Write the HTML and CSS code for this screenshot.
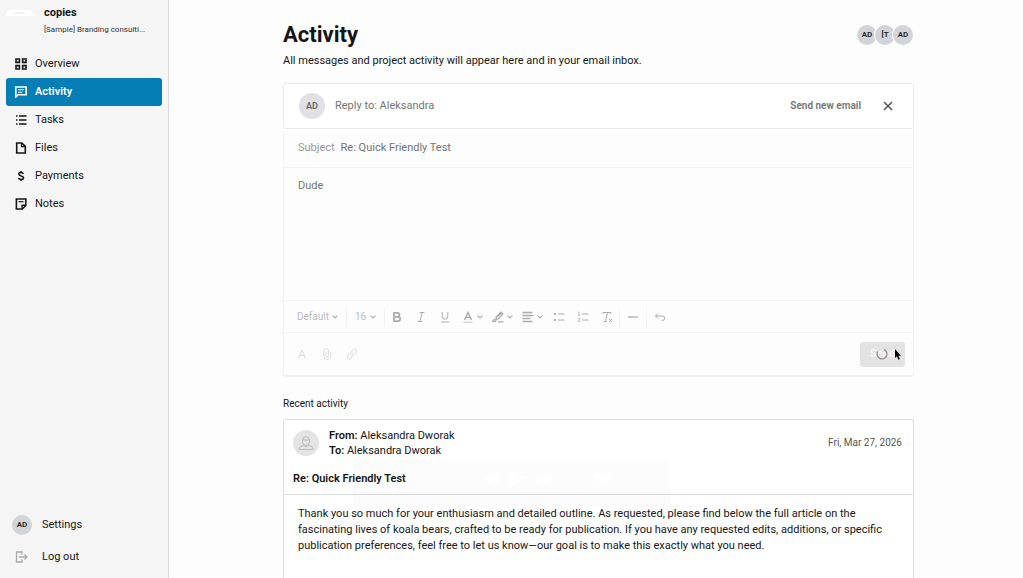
FILE: index.html
```html
<!DOCTYPE html>
<html lang="en">
<head>
<meta charset="utf-8">
<title>Activity</title>
<link rel="stylesheet" href="styles.css">
</head>
<body>
<div class="app">
  <aside class="sidebar">
    <div class="brand">
      <svg class="brand-logo" width="31" height="8" viewBox="0 0 31 8"><path d="M3 1h23l4 6H0z" fill="#fff"/><path d="M9 4h11" stroke="#e6e6e6"/></svg>
      <div class="brand-text">
        <strong class="brand-name">copies</strong>
        <span class="brand-project">[Sample] Branding consulti...</span>
      </div>
    </div>
    <nav class="nav">
      <a class="nav-item" href="#"><svg class="nav-icon" viewBox="0 0 12 12"><path d="M1 1h3.4v3.4H1zM7.6 1H11v3.4H7.6zM1 7.6h3.4V11H1zM7.6 7.6H11V11H7.6z"/></svg>Overview</a>
      <a class="nav-item active" href="#"><svg class="nav-icon" viewBox="0 0 12 12"><path d="M.8 11V1h10.4v7.8H3z"/><path d="M3 3.7h6M3 6.2h4.4" stroke-width="1.1"/></svg>Activity</a>
      <a class="nav-item" href="#"><svg class="nav-icon" viewBox="0 0 12 12"><path d="M1 2h1.5M1 6h1.5M1 10h1.5M4 2h7.5M4 6h7.5M4 10h7.5" stroke-width="1.4"/></svg>Tasks</a>
      <a class="nav-item" href="#"><svg class="nav-icon" viewBox="0 0 12 12"><path d="M1.7 1h5.1l3.5 3.4V11H1.7z"/><path d="M6.5 1v3.7h3.8" stroke-width="1.2"/></svg>Files</a>
      <a class="nav-item" href="#"><svg class="nav-icon" viewBox="0 0 12 12"><path d="M8.3 3.9C8 2.9 7.200 2.500 6 2.500c-1.300 0-2.200.6-2.200 1.600 0 2.400 4.700 1.200 4.700 3.700 0 1-.9 1.700-2.400 1.700-1.400 0-2.300-.6-2.500-1.700M6 1v1.500M6 9.500V11"/></svg>Payments</a>
      <a class="nav-item" href="#"><svg class="nav-icon" viewBox="0 0 12 12"><path d="M1.400 1h9.400v6.500L7.300 11H1.400z"/><path d="M7.100 11V7.300h3.700" stroke-width="1.400"/><path d="M3.500 3.700h5" stroke-width="1.200"/></svg>Notes</a>
    </nav>
    <div class="account">
      <a class="account-item" href="#"><span class="avatar">AD</span>Settings</a>
      <a class="account-item" href="#"><svg class="logout" width="20" height="12" viewBox="0 0 20 12"><path d="M10 3.500V1H4.500v10H10V8.500M7 6h8M12.500 3.500L15 6l-2.500 2.500"/></svg>Log out</a>
    </div>
  </aside>
  <main class="main">
    <div class="content">
      <header class="page-head">
        <h1>Activity</h1>
        <div class="members"><span class="avatar">AD</span><span class="avatar">[T</span><span class="avatar">AD</span></div>
      </header>
      <p class="intro">All messages and project activity will appear here and in your email inbox.</p>

      <form class="composer">
        <div class="reply-bar">
          <span class="avatar large">AD</span>
          <span class="reply-to">Reply to: Aleksandra</span>
          <button class="new-email" type="button">Send new email</button>
          <button class="close" type="button" aria-label="Close"><svg width="10" height="10" viewBox="0 0 10 10"><path d="M1 1l8 8M9 1L1 9"/></svg></button>
        </div>
        <div class="editor">
          <div class="subject"><label for="subject">Subject</label><input id="subject" type="text" value="Re: Quick Friendly Test"></div>
          <textarea class="message" aria-label="Message">Dude</textarea>
          <div class="toolbar">
            <span class="tool-select"><select class="font-select" aria-label="Font"><option>Default</option></select><svg class="chev" viewBox="0 0 6 4"><path d="M.6.7L3 3 5.400.7"/></svg></span>
            <span class="tool-select"><select class="size-select" aria-label="Size"><option>16</option></select><svg class="chev" viewBox="0 0 6 4"><path d="M.6.7L3 3 5.400.7"/></svg></span>
            <button class="tool" type="button" aria-label="Bold"><svg viewBox="0 0 12 12"><path d="M3 1.800h3.500a2 2 0 0 1 0 4H3zM3 5.800h4a2.200 2.200 0 0 1 0 4.400H3z" stroke-width="1.800"/></svg></button>
            <button class="tool" type="button" aria-label="Italic"><svg viewBox="0 0 12 12"><path d="M4.500 1.500h5M2.500 10.500h5M7.200 1.500l-2.400 9"/></svg></button>
            <button class="tool" type="button" aria-label="Underline"><svg viewBox="0 0 12 12"><path d="M3.200 1v4.400a2.800 2.800 0 0 0 5.600 0V1M2 11h8"/></svg></button>
            <button class="tool wide" type="button" aria-label="Text color"><svg viewBox="0 0 12 12"><path d="M2.500 9L6 1.500 9.500 9M3.600 6.500h4.800" stroke-width="1.500"/><path d="M1.500 11.200h9" stroke="#c5c8d8"/></svg><svg class="chev" viewBox="0 0 6 4"><path d="M.6.7L3 3 5.400.7"/></svg></button>
            <button class="tool wide" type="button" aria-label="Highlight"><svg viewBox="0 0 12 12"><path d="M4 6.500l4.800-5.300 2 1.600-4.600 5.200-1.800.3zM5.200 5.500L9.500 2M.5 10.300l2-2 1.500 1.500-.8.800zM6 10.800h5.500" stroke-width="1.300"/></svg><svg class="chev" viewBox="0 0 6 4"><path d="M.6.7L3 3 5.400.7"/></svg></button>
            <button class="tool wide" type="button" aria-label="Align"><svg viewBox="0 0 12 12"><path d="M.5 1.500h10M.5 4.500h11M.5 7.500h8M.5 10.500h10" stroke-width="1.300"/></svg><svg class="chev" viewBox="0 0 6 4"><path d="M.6.7L3 3 5.400.7"/></svg></button>
            <button class="tool" type="button" aria-label="Bulleted list"><svg viewBox="0 0 12 12"><path d="M1 3h1.800M1 9h1.800" stroke-width="1.800"/><path d="M5 3h6.500M5 9h6.500"/></svg></button>
            <button class="tool" type="button" aria-label="Numbered list"><svg viewBox="0 0 12 12"><path d="M1 1.200h1v3M.8 4.300h2.400M1 7.300h1.700v1.500L1 10.500h2" stroke-width=".8"/><path d="M5 3h6.500M5 9h6.500"/></svg></button>
            <button class="tool" type="button" aria-label="Clear formatting"><svg viewBox="0 0 12 12"><path d="M2 3V1.500h8V3M6.500 1.500l-2 9M2.800 10.500h3M8 8l3 3M11 8l-3 3"/></svg></button>
            <button class="tool divided" type="button" aria-label="Horizontal rule"><svg viewBox="0 0 12 12"><path d="M1 6h10" stroke-width="1.300"/></svg></button>
            <button class="tool divided" type="button" aria-label="Undo"><svg viewBox="0 0 12 12"><path d="M4 2.500L1.500 5 4 7.500M1.500 5H8.500a2.200 2.200 0 0 1 0 4.400H7.500"/></svg></button>
          </div>
          <div class="send-row">
            <button class="tool" type="button" aria-label="Format"><svg viewBox="0 0 12 12"><path d="M2.500 10.500L6 2l3.500 8.500M3.700 7.500h4.600"/></svg></button>
            <button class="tool" type="button" aria-label="Attach file"><svg viewBox="0 0 12 12"><path d="M9.800 4v4a3.500 3.500 0 0 1-7 0V3.200a2.400 2.400 0 0 1 4.800 0v4.600a1.300 1.300 0 0 1-2.600 0V4"/></svg></button>
            <button class="tool" type="button" aria-label="Insert link"><svg viewBox="0 0 12 12"><path d="M5.300 7.300a2 2 0 0 1-.3-2.400l1.800-3a2 2 0 0 1 3.500 2.100L9 6.300M6.700 4.700a2 2 0 0 1 .3 2.400l-1.800 3a2 2 0 0 1-3.500-2.100L3 5.700"/></svg></button>
            <button class="send" type="button">Send
              <svg class="spinner" width="14" height="14" viewBox="0 0 14 14"><path d="M9 2.300a5 5 0 1 1-6.300 2"/></svg>
              <svg class="pointer" width="9" height="14" viewBox="0 0 9 14"><path d="M1 1v9l1.900-1.700 1.500 3.400 1.500-.7-1.500-3.300h2.500z"/></svg>
            </button>
          </div>
        </div>
      </form>

      <h2>Recent activity</h2>
      <article class="mail">
        <header class="mail-head">
          <div class="mail-meta">
            <span class="person"><svg width="16" height="16" viewBox="0 0 16 16"><path d="M4.500 5.500a3.500 4 0 0 1 7 0v1a3.500 4 0 0 1-7 0zM4.500 5h7M1 14.500c0-2.500 1.500-3.500 4.500-4L8 12l2.500-1.500c3 .5 4.500 1.500 4.500 4z"/></svg></span>
            <div class="parties"><div><b>From:</b> Aleksandra Dworak</div><div><b>To:</b> Aleksandra Dworak</div></div>
            <time datetime="2026-03-27">Fri, Mar 27, 2026</time>
          </div>
          <h3>Re: Quick Friendly Test</h3>
          <div class="player" aria-hidden="true"><svg width="180" height="20" viewBox="0 0 180 20"><path d="M8 10l8-5v10zM16 10l8-5v10zM36 2l15 8-15 8zM62 5l8 5-8 5zM70 5l8 5-8 5zM120 5h14v9h-14z"/></svg></div>
        </header>
        <p class="mail-body">Thank you so much for your enthusiasm and detailed outline. As requested, please find below the full article on the fascinating lives of koala bears, crafted to be ready for publication. If you have any requested edits, additions, or specific publication preferences, feel free to let us know—our goal is to make this exactly what you need.</p>
      </article>
    </div>
  </main>
</div>
</body>
</html>
```
FILE: styles.css
```css
* { box-sizing: border-box; }
body { margin: 0; background: #fdfdfd; color: #161616; font: 11px/16px Roboto, "Liberation Sans", sans-serif; }
a { color: inherit; text-decoration: none; }
button, input, select, textarea { margin: 0; padding: 0; border: 0; background: none; color: inherit; font: inherit; }
svg { fill: none; stroke: currentColor; flex: none; }
h1, h2, h3, p { margin: 0; }
.app { display: flex; height: 100vh; overflow: hidden; }
.sidebar { display: flex; flex-direction: column; flex: 0 0 169px; background: #f5f5f5; border-right: 1px solid #dcdcdc; }
.brand { display: flex; gap: 8px; padding: 5px 5px 0; height: 50px; }
.brand-logo { margin-top: 4px; stroke: none; }
.brand-text { display: flex; flex-direction: column; gap: 1px; }
.brand-name { font-size: 11px; }
.brand-project { font-size: 8px; white-space: nowrap; color: #333; }
.nav { display: flex; flex-direction: column; padding: 0 6px; }
.nav-item { display: flex; align-items: center; gap: 8px; height: 28px; padding: 0 9px; border-radius: 3px; }
.nav-item.active { background: #057db5; color: #fff; font-weight: 600; }
.nav-icon { width: 12px; height: 12px; stroke-width: 1.6; }
.account { margin-top: auto; padding: 0 12px 5px; }
.account-item { display: flex; align-items: center; gap: 10px; height: 32px; }
.logout { color: #aaa; stroke-width: 1.3; }
.avatar { display: flex; align-items: center; justify-content: center; flex: none; width: 20px; height: 20px; border-radius: 50%; background: #d3d4d7; font-size: 8px; font-weight: 600; color: #222; }
.avatar.large { width: 26px; height: 26px; background: #e1e1e5; color: #666; font-size: 9px; }
.main { flex: 1; min-width: 0; padding: 20px 16px 0 21px; }
.content { max-width: 631px; margin: 0 auto; }
.page-head { display: flex; align-items: center; justify-content: space-between; height: 30px; }
h1 { font-size: 22px; line-height: 30px; font-weight: 700; }
.members { display: flex; padding-right: 1px; }
.members .avatar { box-shadow: 0 0 0 1px #fdfdfd; }
.members .avatar + .avatar { margin-left: -2px; }
.intro { padding-top: 3px; }
.composer { margin-top: 14px; color: #747474; }
.reply-bar { display: flex; align-items: center; height: 46px; padding: 0 15px; border: 1px solid #ebebeb; border-radius: 3px; background: #fff; }
.reply-to { margin-left: 10px; }
.new-email { margin-left: auto; font-size: 10px; font-weight: 600; }
.close { display: flex; padding: 5px; margin-left: 17px; }
.close svg { stroke: #555; stroke-width: 1.5; }
.editor { border: 1px solid #f5f5f7; border-top: 0; border-bottom: 2px solid #f2f2f6; border-radius: 0 0 3px 3px; }
.subject { display: flex; align-items: center; gap: 6px; height: 39px; padding: 0 14px; border-bottom: 1px solid #f3f3f3; }
.subject label { color: #999; }
.subject input { flex: 1; }
.message { display: block; width: 100%; height: 132px; padding: 10px 14px; resize: none; }
.toolbar { display: flex; align-items: center; height: 33px; border-top: 1px solid #f4f4f4; border-bottom: 1px solid #f4f4f4; padding-left: 5px; color: #acacac; }
.tool-select { display: flex; align-items: center; justify-content: center; gap: 3px; height: 20px; padding: 0 8px; border-right: 1px solid #f3f3f3; font-size: 10px; }
.tool-select select { appearance: none; width: auto; color: #bcbcbc; }
.tool { display: flex; align-items: center; justify-content: center; width: 24px; height: 20px; }
.tool svg { width: 12px; height: 12px; }
.tool.wide { width: 30px; gap: 3px; }
.tool .chev, .chev { width: 6px; height: 4px; stroke-width: 1.1; }
.tool.divided { width: 27px; border-left: 1px solid #f3f3f3; }
.send-row { display: flex; align-items: center; height: 42px; padding: 0 8px 0 6px; gap: 1px; color: #dadada; }
.send { position: relative; margin-left: auto; width: 45px; height: 25px; border-radius: 3px; background: #e3e3e3; color: #f8f8f8; font-weight: 600; }
.spinner { position: absolute; left: 15px; top: 5px; stroke: #929292; stroke-width: 1.4; }
.pointer { position: absolute; left: 34px; top: 6px; fill: #000; stroke: none; }
h2 { margin-top: 19px; font-size: 10px; line-height: 16px; font-weight: 400; }
.mail { margin-top: 7px; border: 1px solid #dedede; border-bottom: 0; border-radius: 3px 3px 0 0; min-height: 180px; background: #fff; }
.mail-head { position: relative; border-bottom: 1px solid #dedede; padding: 8px 11px 7px 9px; }
.mail-meta { display: flex; align-items: center; gap: 10px; }
.person { display: flex; align-items: center; justify-content: center; width: 26px; height: 26px; border-radius: 50%; background: #e4e4e4; color: #b5b5b5; }
.person svg { stroke-width: .9; }
.parties { line-height: 15px; }
b, h3 { font-weight: 600; }
time { margin-left: auto; font-size: 10px; color: #555; }
h3 { margin-top: 13px; font-size: 11px; }
.player { position: absolute; left: 69px; top: 40px; width: 318px; height: 46px; padding: 8px 0 0 122px; border-radius: 6px; background: rgba(0, 0, 0, .01); }
.player svg { fill: #fff; stroke: none; }
.mail-body { padding: 11px 14px; }
```
